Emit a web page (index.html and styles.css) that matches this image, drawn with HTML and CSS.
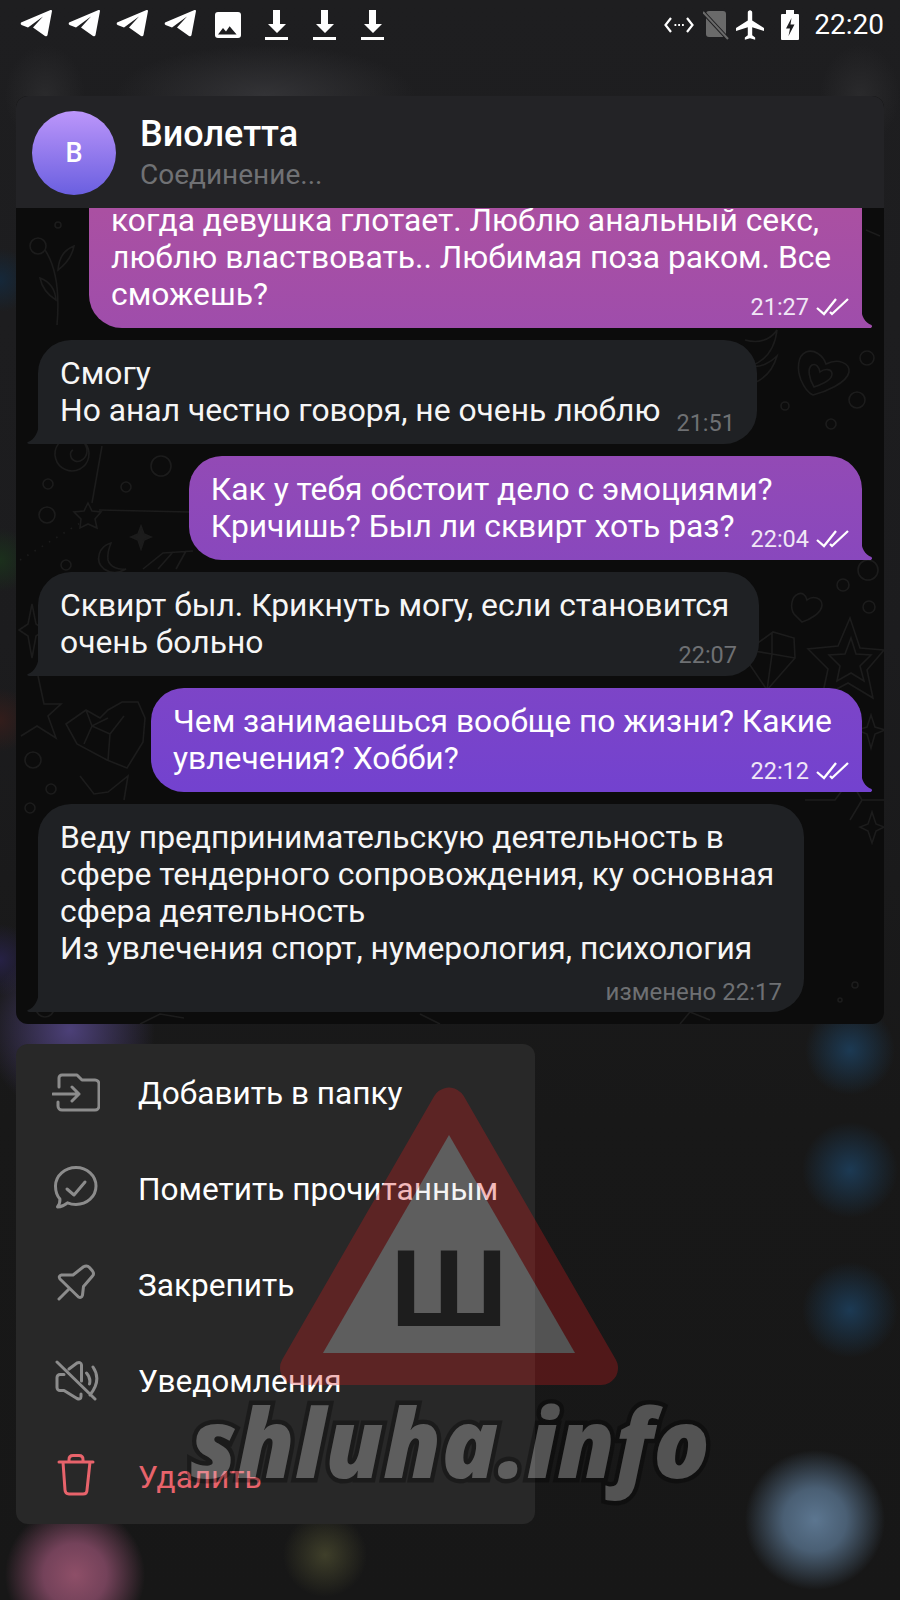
FILE: index.html
```html
<!DOCTYPE html>
<html lang="ru">
<head>
    <meta charset="UTF-8">
    <title>Виолетта</title>
    <link rel="stylesheet" href="styles.css">
</head>
<body>
    <div class="status-bar">
        <div class="status-left">
            <svg class="note-icon" viewBox="0 0 36 36"><use href="#plane"/></svg>
            <svg class="note-icon" viewBox="0 0 36 36"><use href="#plane"/></svg>
            <svg class="note-icon" viewBox="0 0 36 36"><use href="#plane"/></svg>
            <svg class="note-icon" viewBox="0 0 36 36"><use href="#plane"/></svg>
            <svg class="note-icon" viewBox="0 0 36 36">
                <rect x="5" y="5" width="26" height="26" rx="3" fill="#fff"/>
                <path d="M8 27.5l5-6.5 3 3.4 3.6-5.2 7 8.3z" fill="#1e1e20"/>
            </svg>
            <svg class="note-icon" viewBox="0 0 36 36"><use href="#download"/></svg>
            <svg class="note-icon" viewBox="0 0 36 36"><use href="#download"/></svg>
            <svg class="note-icon" viewBox="0 0 36 36"><use href="#download"/></svg>
        </div>
        <div class="status-right">
            <svg class="sys-vpn" viewBox="0 0 30 20" fill="none" stroke="#fff" stroke-width="2.2">
                <path d="M7 3L1.5 10 7 17M23 3l5.5 7L23 17"/>
                <path d="M10.5 10h1.8M14.2 10h1.8M18 10h1.8"/>
            </svg>
            <svg class="sys-sim" viewBox="0 0 26 30">
                <path d="M3 4a3 3 0 0 1 3-3h14a3 3 0 0 1 3 3v20a3 3 0 0 1-3 3H6a3 3 0 0 1-3-3z" fill="#6a6a6a"/>
                <path d="M0 2l25 27" stroke="#1e1e20" stroke-width="4"/>
                <path d="M0 2l25 27" stroke="#6a6a6a" stroke-width="2"/>
            </svg>
            <svg class="sys-flight" viewBox="2 2 19 20"><path fill="#fff" d="M21 16v-2l-8-5V3.5c0-.83-.67-1.5-1.5-1.5S10 2.67 10 3.5V9l-8 5v2l8-2.5V19l-2 1.5V22l3.5-1 3.5 1v-1.5L13 19v-5.5l8 2.5z"/></svg>
            <svg class="sys-battery" viewBox="0 0 18 30">
                <path fill="#fff" d="M5 0h8v4h4a1 1 0 0 1 1 1v24a1 1 0 0 1-1 1H1a1 1 0 0 1-1-1V5a1 1 0 0 1 1-1h4z"/>
                <path fill="#1e1e20" d="M10.5 8L5 18.500h4L7.500 26l6-11.500h-4z"/>
            </svg>
            <span class="clock">22:20</span>
        </div>
    </div>

    <div class="chat-card">
        <div class="chat-head">
            <div class="avatar">В</div>
            <div class="chat-info">
                <div class="chat-name">Виолетта</div>
                <div class="chat-status">Соединение...</div>
            </div>
        </div>
        <div class="chat-body">
            <svg class="doodles" viewBox="16 208 868 816" fill="none" stroke="#1c1c1c" stroke-width="1.6">
                <circle cx="867" cy="358" r="7"/>
                <circle cx="857" cy="400" r="8"/>
                <circle cx="785" cy="406" r="4"/>
                <circle cx="831" cy="424" r="5"/>
                <path d="M806 352c-9 4-9 18-5 28 3 7 7 13 12 15 12-3 34-12 36-23 1-9-11-14-23-8-3-9-12-15-20-12z"/>
                <path d="M812 365c-5 3-3 14 2 22 6-2 18-7 18-13 0-5-7-6-12-2-1-5-4-9-8-7z"/>
                <path d="M745 340c15 4 25 0 32-10-2 18-10 30-26 36 10 2 20-4 26-10-4 14-14 26-32 30"/>
                <circle cx="868" cy="570" r="10"/>
                <circle cx="843" cy="585" r="6"/>
                <circle cx="869" cy="607" r="6"/>
                <path d="M798 594c-7 3-8 14-4 20l8 8c7-2 20-9 20-17 0-7-9-10-15-5-1-5-5-8-9-6z"/>
                <path d="M850 618l10 30 24 2-17 20 6 28-25-15-26 14 6-28-20-20 30-3z"/>
                <path d="M851 638l5 16 15 1-11 11 4 15-13-8-14 8 3-15-11-11 16-1z"/>
                <path d="M748 650l25-18 21 6 1 20-28 32-19-28zM748 650l24 4 23 4M772 632v22l-5 36"/>
                <path d="M871 715l4 12 10 3-10 4-4 14-4-14-10-4 10-3z"/>
                <path d="M805 800h30l15-20 12 20h22M850 820l12-20"/>
                <path d="M85 443a17 17 0 1 1-14-6c10 0 16 7 16 14s-7 12-12 10-6-9-2-11"/>
                <circle cx="161" cy="466" r="10"/>
                <path d="M88 503l4 8 9 1-6 7 2 9-9-4-8 4 1-9-7-7 10-1zM92 503l10-57M99 510l91 2"/>
                <path d="M20 560l65-40" stroke-dasharray="1.500 7"/>
                <circle cx="47" cy="515" r="8"/>
                <circle cx="48" cy="484" r="5"/>
                <circle cx="126" cy="487" r="5"/>
                <circle cx="66" cy="565" r="5"/>
                <path d="M111 543c-12 3-17 18-7 26 7 5 15 4 22 0-8 1-16-2-18-9-1-6 1-12 3-17z"/>
                <path d="M141 526l3 8 7 3-7 3-3 9-3-9-7-3 7-3z" fill="#1c1c1c"/>
                <path d="M143 569l20-16 30-2M158 569l15-17M176 569l10-18"/>
                <path d="M32 604l4 20 9 6-9 6-4 22-4-22-9-6 9-6z"/>
                <path d="M38 676l6 28 17 0-13 12 8 22-19-12-16 10"/>
                <path d="M66 724l20-14 14 8 8-8 14-8 16 0 7 16-2 24-16 26-20-8-30-16zM86 710l6 16 16-8M92 726l-8 18M92 726l18 8 14-18M110 734l-2 26"/>
                <circle cx="33" cy="760" r="8"/>
                <circle cx="51" cy="789" r="5"/>
                <circle cx="30" cy="808" r="5"/>
                <path d="M80 776l14 18 14-2 20-16-4 24"/>
                <path d="M45 250c10 15 15 40 12 75M58 270c8-6 14-14 16-24-8 3-15 10-16 24zM56 300c-8-5-14-12-16-22 8 3 15 10 16 22z"/>
                <circle cx="38" cy="246" r="8"/>
                <circle cx="58" cy="225" r="3"/>
                <path d="M866 230l14 6M872 812l4 12 8 3-8 4-4 12-4-12-8-4 8-3z"/>
                <circle cx="840" cy="1000" r="2"/>
                <circle cx="855" cy="985" r="3"/>
                <circle cx="45" cy="1008" r="9"/>
                <path d="M140 1024l20-10 24 4M440 1024l-20-10M680 1024l10-12 20 8"/>
            </svg>

            <div class="msg msg-out msg-cut">когда девушка глотает. Люблю анальный секс,<br>люблю властвовать.. Любимая поза раком. Все<br>сможешь?<span class="meta">21:27<svg class="ticks" viewBox="0 0 34 20"><use href="#ticks"/></svg></span></div>
            <div class="msg msg-in">Смогу<br>Но анал честно говоря, не очень люблю<span class="meta">21:51</span></div>
            <div class="msg msg-out">Как у тебя обстоит дело с эмоциями?<br>Кричишь? Был ли сквирт хоть раз?<span class="meta">22:04<svg class="ticks" viewBox="0 0 34 20"><use href="#ticks"/></svg></span></div>
            <div class="msg msg-in msg-wide">Сквирт был. Крикнуть могу, если становится<br>очень больно<span class="meta">22:07</span></div>
            <div class="msg msg-out msg-hobby">Чем занимаешься вообще по жизни? Какие<br>увлечения? Хобби?<span class="meta">22:12<svg class="ticks" viewBox="0 0 34 20"><use href="#ticks"/></svg></span></div>
            <div class="msg msg-in msg-last">Веду предпринимательскую деятельность в<br>сфере тендерного сопровождения, ку основная<br>сфера деятельность<br>Из увлечения спорт, нумерология, психология<span class="meta meta-edited">изменено 22:17</span></div>
        </div>
    </div>

    <div class="menu">
        <div class="menu-row">
            <svg class="menu-icon" viewBox="0 0 48 48"><path d="M7 19v-9a3 3 0 0 1 3-3h15l5 5h13a4 4 0 0 1 4 4v22a4 4 0 0 1-4 4H10a4 4 0 0 1-4-4v-4M1 26h26M20 19l7 7-7 7"/></svg>
            <span>Добавить в папку</span>
        </div>
        <div class="menu-row">
            <svg class="menu-icon" viewBox="0 0 48 48"><path d="M24 3.500c11 0 20 8 20 18.500s-9 18.500-20 18.500c-3 0-6-.6-8.500-1.700-3 2.600-6.500 4-10 4.200 1.600-2.200 2.700-5 2.400-8C4.800 31.500 3.500 27 3.500 22 3.500 11.500 13 3.500 24 3.500zM15 25l7 6 11-13"/></svg>
            <span>Пометить прочитанным</span>
        </div>
        <div class="menu-row">
            <svg class="menu-icon" viewBox="0 0 48 48"><path d="M21 15l10.500-8.200q3.500-2 6 .7l3 3.500q2 2.800 0 5L31.500 26.500l-1 8.500q-1 3.500-4 2L8 19q-2-3 1.500-4zM16.500 29.500L7 39"/></svg>
            <span>Закрепить</span>
        </div>
        <div class="menu-row">
            <svg class="menu-icon" viewBox="0 0 48 48"><path d="M5 6l38 37M12 18.500H8a3 3 0 0 0-3 3v10a3 3 0 0 0 3 3h4l13 8q4 1.500 4-2V38M17 13l8-6q4-1.500 4.500 2V25M34.500 17q4.500 5 3 11M41 11q9 13-3 28"/></svg>
            <span>Уведомления</span>
        </div>
        <div class="menu-row menu-danger">
            <svg class="menu-icon" viewBox="0 0 48 48"><path d="M7 10h34M17 10V7.500q0-4 4-4h6q4 0 4 4V10M11 10l2 28q.3 4 4 4h14q4 0 4-4l3-28"/></svg>
            <span>Удалить</span>
        </div>
    </div>

    <svg class="watermark" viewBox="0 0 900 1600">
        <g opacity="0.3">
            <path d="M449 1104.600L601 1368H297z" fill="#d51b1e" stroke="#d51b1e" stroke-width="34" stroke-linejoin="round"/>
            <path d="M449 1135L575 1353H323z" fill="#dcdcdc"/>
            <text class="wm-letter" x="449" y="1326" text-anchor="middle" textLength="118" lengthAdjust="spacingAndGlyphs">Ш</text>
            <text class="wm-site" x="190" y="1478" textLength="520" lengthAdjust="spacingAndGlyphs">shluha.info</text>
        </g>
    </svg>

    <svg class="defs" width="0" height="0">
        <defs>
            <path id="plane" fill="#fff" d="M3 15.500Q2 17 3.500 18l6.500 2.500L25 9.500 15 20.500 27 29q2 1 2.500-1L34 4q0-1.500-1.500-1z"/>
            <path id="download" fill="#fff" d="M15 3h7v14h6l-9 9-9-9h5zM7 30h23v3H7z"/>
            <path id="ticks" fill="none" stroke="#fff" stroke-width="2.300" d="M1 11l7 6L20 2M14 15l2 2L32 2"/>
        </defs>
    </svg>
</body>
</html>
```

FILE: styles.css
```css
* {
    margin: 0;
    padding: 0;
    box-sizing: border-box;
}
body {
    position: relative;
    width: 900px;
    height: 1600px;
    overflow: hidden;
    font-family: Roboto, "Noto Sans", sans-serif;
    color: #fff;
    background:
        radial-gradient(circle 70px at 815px 1520px, #5c7690 0, #4a5f74 45%, rgba(74,95,116,0) 100%),
        radial-gradient(circle 70px at 75px 1575px, #8e4f68 0, #74425a 45%, rgba(116,66,90,0) 100%),
        radial-gradient(circle 42px at 325px 1555px, #3f3f2a 0, rgba(63,63,42,0) 100%),
        radial-gradient(circle 45px at 850px 1050px, #1c3a54 0, rgba(28,58,84,0) 100%),
        radial-gradient(circle 48px at 850px 1170px, #1c3a54 0, rgba(28,58,84,0) 100%),
        radial-gradient(circle 48px at 850px 1310px, #1c3a54 0, rgba(28,58,84,0) 100%),
        radial-gradient(circle 85px at 70px 1030px, #4c4078 0, rgba(76,64,120,0) 100%),
        radial-gradient(circle 32px at 0 280px, #15283a 0, rgba(21,40,58,0) 100%),
        radial-gradient(circle 32px at 0 560px, #1b301c 0, rgba(27,48,28,0) 100%),
        radial-gradient(circle 32px at 0 720px, #331d1b 0, rgba(51,29,27,0) 100%),
        radial-gradient(circle 36px at 0 960px, #262145 0, rgba(38,33,69,0) 100%),
        radial-gradient(ellipse 150px 50px at 265px 95px, #333336 0, rgba(51,51,54,0) 100%),
        radial-gradient(ellipse 40px 50px at 45px 95px, #2a2a2c 0, rgba(42,42,44,0) 100%),
        radial-gradient(ellipse 40px 50px at 860px 95px, #2a2a2c 0, rgba(42,42,44,0) 100%),
        linear-gradient(180deg, #1e1e20 0, #1c1c1e 40%, #181818 70%, #171717 100%);
}
.status-bar {
    display: flex;
    justify-content: space-between;
    align-items: center;
    height: 50px;
    padding: 0 16px 0 18px;
}
.status-left {
    display: flex;
    gap: 12px;
}
.status-right {
    display: flex;
    align-items: center;
}
.note-icon {
    width: 36px;
    height: 36px;
}
.sys-vpn {
    width: 30px;
    height: 20px;
    margin-right: 9px;
}
.sys-sim {
    width: 26px;
    height: 30px;
    margin-right: 7px;
}
.sys-flight {
    width: 28px;
    height: 30px;
    margin-right: 17px;
}
.sys-battery {
    width: 18px;
    height: 30px;
    margin-right: 15px;
}
.clock {
    font-size: 28px;
    line-height: 34px;
}

.chat-card {
    margin: 46px 16px 0;
    height: 928px;
    border-radius: 12px;
    overflow: hidden;
    display: flex;
    flex-direction: column;
    background: #0c0c0c;
}
.chat-head {
    display: flex;
    align-items: center;
    flex: 0 0 112px;
    padding: 2px 0 0 16px;
    background: #232326;
}
.avatar {
    width: 84px;
    height: 84px;
    border-radius: 50%;
    display: flex;
    align-items: center;
    justify-content: center;
    font-size: 27px;
    font-weight: 500;
    background: linear-gradient(180deg, #bc96fa, #6a5fe0);
}
.chat-info {
    margin-left: 24px;
}
.chat-name {
    font-size: 36px;
    font-weight: 500;
    line-height: 40px;
}
.chat-status {
    font-size: 28px;
    line-height: 36px;
    margin-top: 3px;
    color: #707174;
}
.chat-body {
    position: relative;
    flex: 1;
    min-height: 0;
    overflow: hidden;
    display: flex;
    flex-direction: column;
    justify-content: flex-end;
    gap: 12px;
    padding: 0 22px 12px;
}
.doodles {
    position: absolute;
    left: 0;
    top: 0;
    width: 868px;
    height: 816px;
}

.msg {
    position: relative;
    flex: none;
    width: max-content;
    display: flow-root;
    padding: 15px 22px;
    font-size: 31.8px;
    line-height: 37px;
    border-radius: 33px;
}
.msg-in {
    align-self: flex-start;
    background: #1f2124;
    border-bottom-left-radius: 0;
    color: #f6f6f6;
}
.msg-out {
    align-self: flex-end;
    padding-right: 12px;
    border-bottom-right-radius: 0;
    background: linear-gradient(180deg, #aa50a2 210px, #7342cf 790px) fixed;
}
.msg-in::after,
.msg-out::after {
    content: "";
    position: absolute;
    bottom: 0;
    height: 22px;
    width: 12px;
    background: inherit;
}
.msg-in::after {
    left: -11px;
    clip-path: path("M12 0C12 10 7 18 1 20Q-1 21 2 22H12Z");
}
.msg-out::after {
    right: -11px;
    clip-path: path("M0 0C0 10 4 17 10.500 19Q12 20.500 10 22H0Z");
}
.msg-cut {
    width: 773px;
    border-top-left-radius: 0;
    border-top-right-radius: 0;
}
.msg-hobby {
    width: 711px;
}
.msg-wide {
    width: 721px;
}
.msg-last {
    width: 766px;
}
.meta {
    float: right;
    display: flex;
    align-items: center;
    height: 30px;
    margin: 16px 0 -10px 16px;
    font-size: 23.5px;
    line-height: 30px;
    color: #6e7073;
}
.msg-out .meta {
    color: #f0e6f6;
}
.meta-edited {
    float: none;
    justify-content: flex-end;
    margin: 0;
    padding-top: 19px;
    font-size: 24px;
}
.ticks {
    width: 34px;
    height: 20px;
    margin-left: 7px;
}

.menu {
    width: 519px;
    margin: 20px 0 0 16px;
    border-radius: 12px;
    background: #282828;
}
.menu-row {
    display: flex;
    align-items: center;
    height: 96px;
    padding: 2px 0 0 36px;
    gap: 38px;
    font-size: 31.6px;
}
.menu-icon {
    flex: none;
    width: 48px;
    height: 48px;
    margin-top: -2px;
    fill: none;
    stroke: #8c8c8c;
    stroke-width: 3;
    stroke-linecap: round;
    stroke-linejoin: round;
}
.menu-danger {
    color: #e8636b;
}
.menu-danger .menu-icon {
    stroke: #e8636b;
}

.watermark {
    position: absolute;
    left: 0;
    top: 0;
    width: 900px;
    height: 1600px;
    pointer-events: none;
}
.wm-letter {
    font-family: "Liberation Sans", sans-serif;
    font-weight: 700;
    font-size: 109px;
    fill: #050505;
}
.wm-site {
    font-family: "Open Sans", sans-serif;
    font-weight: 800;
    font-style: italic;
    font-size: 96px;
    fill: #dcdcdc;
    stroke: #000;
    stroke-width: 9px;
    paint-order: stroke;
}
.defs {
    position: absolute;
}
```
